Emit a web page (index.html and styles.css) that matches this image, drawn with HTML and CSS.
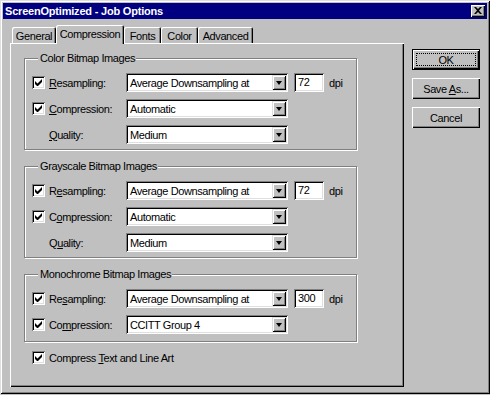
FILE: index.html
```html
<!DOCTYPE html>
<html lang="en">
<head>
  <meta charset="UTF-8">
  <title>ScreenOptimized - Job Options</title>
  <link rel="stylesheet" href="styles.css">
</head>
<body>
  <div class="window">
    <div class="titlebar">
      <span class="title">ScreenOptimized - Job Options</span>
      <span class="close" title="Close">
        <svg width="8" height="7" viewBox="0 0 8 7"><path d="M0 0h2l2 2 2-2h2L5 3.5 8 7H6L4 5 2 7H0l3-3.5z" fill="#000"/></svg>
      </span>
    </div>

    <div class="client">
      <div class="tabctl">
        <div class="tabs">
          <div class="tab tab-general">General</div>
          <div class="tab active tab-compression">Compression</div>
          <div class="tab tab-fonts">Fonts</div>
          <div class="tab tab-color">Color</div>
          <div class="tab tab-advanced">Advanced</div>
        </div>

        <div class="pane">
          <fieldset class="group">
            <legend>Color Bitmap Images</legend>
            <div class="row">
              <span class="check"><svg width="7" height="7" viewBox="0 0 7 7"><path d="M0 2v3l2 2h1l4-4V0L2.5 4.5z" fill="#000"/></svg></span>
              <span class="lbl"><u>R</u>esampling:</span>
              <div class="combo"><span class="val">Average Downsampling at</span><span class="drop"><i></i></span></div>
              <div class="edit">72</div>
              <span class="unit">dpi</span>
            </div>
            <div class="row">
              <span class="check"><svg width="7" height="7" viewBox="0 0 7 7"><path d="M0 2v3l2 2h1l4-4V0L2.5 4.5z" fill="#000"/></svg></span>
              <span class="lbl"><u>C</u>ompression:</span>
              <div class="combo"><span class="val">Automatic</span><span class="drop"><i></i></span></div>
            </div>
            <div class="row">
              <span class="nocheck"></span>
              <span class="lbl"><u>Q</u>uality:</span>
              <div class="combo"><span class="val">Medium</span><span class="drop"><i></i></span></div>
            </div>
          </fieldset>

          <fieldset class="group">
            <legend>Grayscale Bitmap Images</legend>
            <div class="row">
              <span class="check"><svg width="7" height="7" viewBox="0 0 7 7"><path d="M0 2v3l2 2h1l4-4V0L2.5 4.5z" fill="#000"/></svg></span>
              <span class="lbl">R<u>e</u>sampling:</span>
              <div class="combo"><span class="val">Average Downsampling at</span><span class="drop"><i></i></span></div>
              <div class="edit">72</div>
              <span class="unit">dpi</span>
            </div>
            <div class="row">
              <span class="check"><svg width="7" height="7" viewBox="0 0 7 7"><path d="M0 2v3l2 2h1l4-4V0L2.5 4.5z" fill="#000"/></svg></span>
              <span class="lbl">C<u>o</u>mpression:</span>
              <div class="combo"><span class="val">Automatic</span><span class="drop"><i></i></span></div>
            </div>
            <div class="row">
              <span class="nocheck"></span>
              <span class="lbl">Q<u>u</u>ality:</span>
              <div class="combo"><span class="val">Medium</span><span class="drop"><i></i></span></div>
            </div>
          </fieldset>

          <fieldset class="group group-mono">
            <legend>Monochrome Bitmap Images</legend>
            <div class="row">
              <span class="check"><svg width="7" height="7" viewBox="0 0 7 7"><path d="M0 2v3l2 2h1l4-4V0L2.5 4.5z" fill="#000"/></svg></span>
              <span class="lbl">Re<u>s</u>ampling:</span>
              <div class="combo"><span class="val">Average Downsampling at</span><span class="drop"><i></i></span></div>
              <div class="edit">300</div>
              <span class="unit">dpi</span>
            </div>
            <div class="row">
              <span class="check"><svg width="7" height="7" viewBox="0 0 7 7"><path d="M0 2v3l2 2h1l4-4V0L2.5 4.5z" fill="#000"/></svg></span>
              <span class="lbl">Co<u>m</u>pression:</span>
              <div class="combo"><span class="val">CCITT Group 4</span><span class="drop"><i></i></span></div>
            </div>
          </fieldset>

          <div class="row row-text">
            <span class="check"><svg width="7" height="7" viewBox="0 0 7 7"><path d="M0 2v3l2 2h1l4-4V0L2.5 4.5z" fill="#000"/></svg></span>
            <span class="lbl">Compress <u>T</u>ext and Line Art</span>
          </div>
        </div>
      </div>

      <div class="buttons">
        <div class="btn default"><span class="focus">OK</span></div>
        <div class="btn"><span>Save <u>A</u>s...</span></div>
        <div class="btn"><span>Cancel</span></div>
      </div>
    </div>
  </div>
</body>
</html>
```

FILE: styles.css
```css
:root {
  --face: #c0c0c0;
  --light: #dfdfdf;
  --hilight: #ffffff;
  --shadow: #808080;
  --dark: #000000;
  --caption: #000080;
}

* {
  box-sizing: border-box;
}

body {
  margin: 0;
  width: 490px;
  height: 395px;
  background: var(--face);
  font-family: "Liberation Sans", Arial, sans-serif;
  font-size: 11px;
  letter-spacing: -0.4px;
  color: #000;
  overflow: hidden;
}

u {
  text-decoration-thickness: 1px;
  text-underline-offset: 1px;
}

/* Window frame */
.window {
  width: 490px;
  height: 394px;
  padding: 3px;
  background: var(--face);
  box-shadow:
    inset 1px 1px var(--light),
    inset -1px -1px var(--dark),
    inset 2px 2px var(--hilight),
    inset -2px -2px var(--shadow);
  display: flex;
  flex-direction: column;
}

.titlebar {
  height: 16px;
  background: var(--caption);
  color: #fff;
  display: flex;
  align-items: center;
  justify-content: space-between;
  padding: 0 2px 0 2px;
}

.title {
  font-weight: bold;
  letter-spacing: -0.2px;
}

.close {
  width: 14px;
  height: 12px;
  background: var(--face);
  box-shadow:
    inset 1px 1px var(--hilight),
    inset -1px -1px var(--dark),
    inset -2px -2px var(--shadow);
  display: flex;
  align-items: center;
  justify-content: center;
  padding-bottom: 1px;
}

/* Client area */
.client {
  flex: 1;
  display: flex;
  padding: 6px 0 0 7px;
}

.tabctl {
  width: 394px;
  display: flex;
  flex-direction: column;
}

.tabs {
  display: flex;
  align-items: flex-end;
  height: 18px;
  padding-left: 2px;
}

.tab {
  height: 16px;
  display: flex;
  align-items: center;
  justify-content: center;
  padding-top: 2px;
  border-radius: 2px 2px 0 0;
  box-shadow:
    inset 1px 1px var(--hilight),
    inset -1px 0 var(--dark),
    inset -2px 0 var(--shadow);
}

.tab-general { width: 44px; }
.tab-compression { width: 68px; }
.tab-fonts { width: 37px; }
.tab-color { width: 37px; }
.tab-advanced { width: 55px; }

.tab.active {
  height: 19px;
  margin-bottom: -1px;
  padding-top: 1px;
  padding-bottom: 2px;
  position: relative;
  z-index: 2;
  background: var(--face);
}

.pane {
  height: 344px;
  padding: 9px 0 0 14px;
  box-shadow:
    inset 1px 1px var(--hilight),
    inset -1px -1px var(--dark),
    inset -2px -2px var(--shadow);
}

/* Group boxes */
.group {
  width: 333px;
  margin: 0 0 10px 0;
  padding: 8px 0 5px 7px;
  border: 1px solid var(--shadow);
  box-shadow: 1px 1px 0 var(--hilight), inset 1px 1px 0 var(--hilight);
  display: flex;
  flex-direction: column;
  gap: 7px;
}

.group legend {
  margin-left: 6px;
  padding: 0 1px 0 2px;
  line-height: 13px;
  background: var(--face);
}

.group-mono {
  padding-bottom: 7px;
  margin-bottom: 6px;
}

.row {
  display: flex;
  align-items: center;
  height: 19px;
}

.check {
  width: 13px;
  height: 13px;
  background: #fff;
  box-shadow:
    inset 1px 1px var(--shadow),
    inset -1px -1px var(--hilight),
    inset 2px 2px var(--dark),
    inset -2px -2px var(--light);
  display: flex;
  align-items: center;
  justify-content: center;
  margin-right: 4px;
}

.nocheck {
  width: 17px;
}

.lbl {
  width: 77px;
  white-space: nowrap;
}

.combo {
  width: 162px;
  height: 19px;
  background: #fff;
  box-shadow:
    inset 1px 1px var(--shadow),
    inset -1px -1px var(--hilight),
    inset 2px 2px var(--dark),
    inset -2px -2px var(--light);
  display: flex;
  align-items: center;
  justify-content: space-between;
  padding: 2px 2px 2px 4px;
}

.val {
  white-space: nowrap;
}

.drop {
  width: 14px;
  height: 15px;
  background: var(--face);
  box-shadow:
    inset 1px 1px var(--light),
    inset -1px -1px var(--dark),
    inset 2px 2px var(--hilight),
    inset -2px -2px var(--shadow);
  display: flex;
  align-items: center;
  justify-content: center;
}

.drop i {
  width: 0;
  height: 0;
  border-left: 3.5px solid transparent;
  border-right: 3.5px solid transparent;
  border-top: 4px solid #000;
}

.edit {
  width: 30px;
  height: 19px;
  margin-left: 6px;
  background: #fff;
  box-shadow:
    inset 1px 1px var(--shadow),
    inset -1px -1px var(--hilight),
    inset 2px 2px var(--dark),
    inset -2px -2px var(--light);
  padding: 3px 0 0 4px;
}

.unit {
  margin-left: 5px;
}

.row-text {
  margin-left: 8px;
}

.row-text .lbl {
  width: auto;
}

/* Buttons */
.buttons {
  display: flex;
  flex-direction: column;
  gap: 8px;
  margin: 24px 0 0 8px;
}

.btn {
  width: 68px;
  height: 21px;
  display: flex;
  align-items: center;
  justify-content: center;
  box-shadow:
    inset 1px 1px var(--hilight),
    inset -1px -1px var(--dark),
    inset -2px -2px var(--shadow);
}

.btn.default {
  border: 1px solid var(--dark);
  padding: 3px;
}

.btn .focus {
  flex: 1;
  align-self: stretch;
  display: flex;
  align-items: center;
  justify-content: center;
  border: 1px dotted var(--dark);
}
```
